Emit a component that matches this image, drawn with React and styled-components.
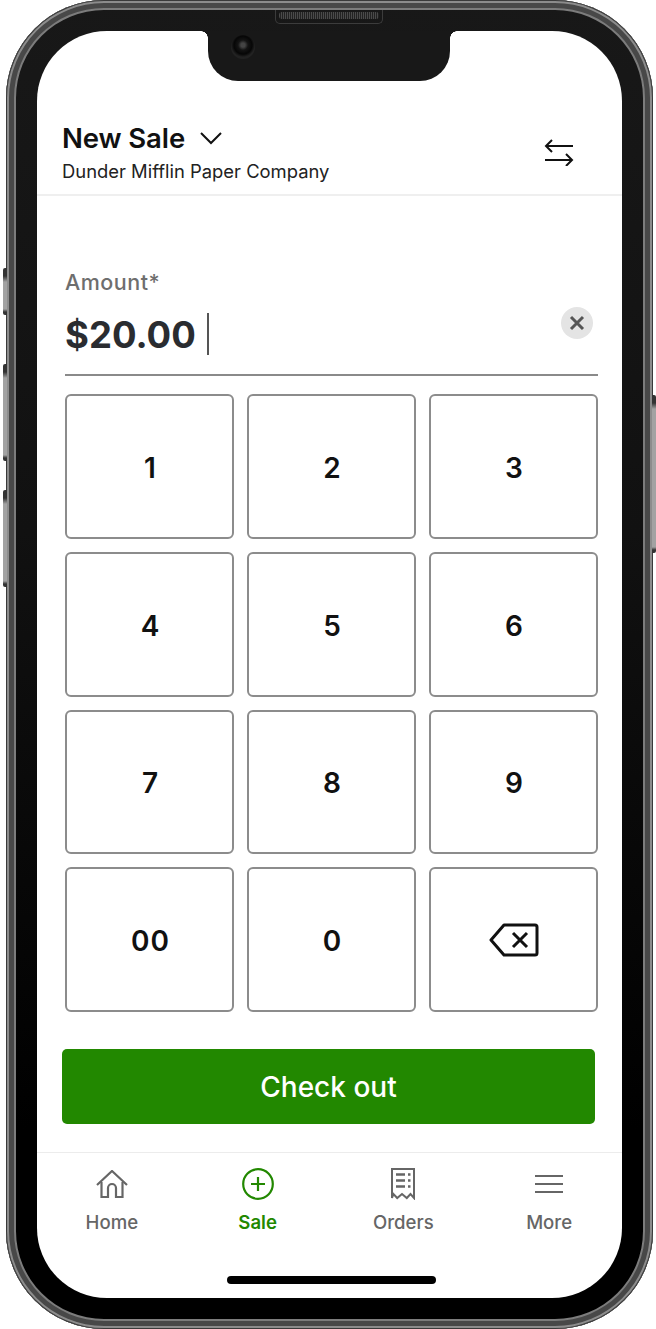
import React from 'react'
import styled, { createGlobalStyle } from 'styled-components'

const GlobalStyle = createGlobalStyle`
  html, body { margin: 0; padding: 0; background: #fff; }
  * { box-sizing: border-box; }
`

const Page = styled.div`
  width: 656px;
  height: 1329px;
  padding-left: 6px;
  font-family: Inter, 'Liberation Sans', sans-serif;
  position: relative;
  overflow: hidden;
`

const Frame = styled.div`
  position: relative;
  width: 647px;
  height: 1329px;
  padding: 31px;
  border-radius: 98px;
  background: linear-gradient(180deg, #181818 0%, #111 40%, #000 85%);
  box-shadow:
    inset 0 0 0 1px #3a3a3a,
    inset 0 0 0 3px #8c8c8c,
    inset 0 0 0 8px #484848,
    inset 0 0 0 10px #7c7c7c;
`

const SideButton = styled.div`
  position: absolute;
  top: ${p => p.$top}px;
  height: ${p => p.$height}px;
  width: 4px;
  ${p => (p.$right ? 'right: -3px; border-radius: 0 2px 2px 0;' : 'left: -3px; border-radius: 2px 0 0 2px;')}
  background: linear-gradient(180deg, #333 0 8px, #a2a2a2 14px, #a2a2a2 calc(100% - 6px), #333 calc(100% - 3px));
`

const Notch = styled.div`
  position: absolute;
  z-index: 2;
  left: 202px;
  top: 31px;
  width: 242px;
  height: 50px;
  background: #181818;
  border-radius: 0 0 30px 30px;

  &::before, &::after {
    content: '';
    position: absolute;
    top: 0;
    width: 7px;
    height: 7px;
  }
  &::before {
    left: -7px;
    background: radial-gradient(circle at 0 100%, transparent 6.5px, #181818 7px);
  }
  &::after {
    right: -7px;
    background: radial-gradient(circle at 100% 100%, transparent 6.5px, #181818 7px);
  }
`

const Speaker = styled.div`
  position: absolute;
  z-index: 2;
  left: 269px;
  top: 10px;
  width: 108px;
  height: 14px;
  border: 1px solid #3c3c3c;
  border-top: none;
  border-radius: 0 0 5px 5px;
  padding: 2px 3px 0;

  &::after {
    content: '';
    display: block;
    height: 7px;
    border-radius: 3px;
    background: repeating-linear-gradient(90deg, #4a4a4a 0 1px, #222 1px 2px);
  }
`

const Camera = styled.div`
  position: absolute;
  z-index: 2;
  left: 225px;
  top: 35px;
  width: 24px;
  height: 24px;
  border-radius: 50%;
  background: radial-gradient(circle at 50% 42%, #444 0 2px, #141414 5px, #060606 9px, #222 12px);
`

const Screen = styled.div`
  position: relative;
  width: 585px;
  height: 1267px;
  background: #fff;
  border-radius: 70px;
  overflow: hidden;
  display: flex;
  flex-direction: column;
`

const Header = styled.header`
  height: 165px;
  flex: none;
  border-bottom: 2px solid #efefef;
  padding: 90px 48px 0 25px;
  display: flex;
  justify-content: space-between;
  align-items: flex-start;
`

const TitleRow = styled.div`
  display: flex;
  align-items: center;
  gap: 15px;
  height: 34px;
`

const Title = styled.h1`
  margin: 0;
  font-size: 27.5px;
  font-weight: 600;
  letter-spacing: -0.1px;
  color: #111;
`

const Subtitle = styled.div`
  font-size: 18.4px;
  line-height: 24px;
  margin-top: 4px;
  color: #222;
`

const SwapButton = styled.div`
  margin-top: 17px;
  width: 30px;
  height: 28px;
`

const Body = styled.main`
  flex: 1;
  padding: 72px 24px 0 28px;
`

const AmountLabel = styled.div`
  font-size: 21.5px;
  letter-spacing: 0.5px;
  line-height: 28px;
  font-weight: 500;
  color: #6e6e6e;
`

const AmountRow = styled.div`
  height: 77px;
  margin-top: 3px;
  border-bottom: 2px solid #8a8a8a;
  display: flex;
  align-items: flex-start;
`

const AmountValue = styled.div`
  font-size: 36.5px;
  line-height: 48px;
  margin-top: 12px;
  font-weight: 700;
  color: #2a2c30;
`

const Caret = styled.div`
  width: 2px;
  height: 42px;
  margin: 14px 0 0 11px;
  background: #555;
`

const ClearButton = styled.div`
  margin: 8px 5px 0 auto;
  width: 32px;
  height: 32px;
  border-radius: 50%;
  background: #e4e4e4;
  display: flex;
  align-items: center;
  justify-content: center;
`

const Keypad = styled.div`
  margin-top: 18px;
  height: 618px;
  display: grid;
  grid-template-columns: repeat(3, 169px);
  grid-auto-rows: 1fr;
  column-gap: 13px;
  row-gap: 13px;
`

const Key = styled.div`
  border: 2px solid #8c8c8c;
  border-radius: 6px;
  background: #fff;
  display: flex;
  align-items: center;
  justify-content: center;
  font-size: 28px;
  font-weight: 600;
  letter-spacing: 1px;
  color: #111;
`

const KeyLabel = styled.span`
  padding: 3px 0 0 2px;
`

const CheckoutButton = styled.div`
  margin: 37px 27px 0 25px;
  height: 75px;
  flex: none;
  background: #228800;
  border-radius: 5px;
  color: #fff;
  font-size: 28px;
  font-weight: 500;
  display: flex;
  align-items: center;
  justify-content: center;
`

const TabBar = styled.nav`
  margin-top: 28px;
  height: 146px;
  flex: none;
  border-top: 1px solid #ececec;
  padding-left: 2px;
  display: grid;
  grid-template-columns: repeat(4, 1fr);
  position: relative;
`

const Tab = styled.div`
  display: flex;
  flex-direction: column;
  align-items: center;
  padding-top: 13px;
  color: ${p => (p.$active ? '#228800' : '#666')};
  font-size: 18.6px;
  font-weight: ${p => (p.$active ? 600 : 500)};
`

const TabIcon = styled.div`
  width: 36px;
  height: 36px;
  display: flex;
  align-items: center;
  justify-content: center;
`

const TabLabel = styled.div`
  margin-top: 8px;
  line-height: 24px;
`

const HomeBar = styled.div`
  position: absolute;
  left: 190px;
  bottom: 14px;
  width: 209px;
  height: 8px;
  border-radius: 4px;
  background: #000;
`

const Chevron = () => (
  <svg width="22" height="14" viewBox="0 0 22 14" fill="none" stroke="#111" strokeWidth="2">
    <path d="M1 2l10 10L21 2" />
  </svg>
)

const SwapIcon = () => (
  <svg width="30" height="28" viewBox="0 0 30 28" fill="none" stroke="#111" strokeWidth="2">
    <path d="M29 8H2M8 2L2 8l6 6" />
    <path d="M1 22h27M22 16l6 6-6 6" />
  </svg>
)

const CloseIcon = () => (
  <svg width="16" height="16" viewBox="0 0 16 16" fill="none" stroke="#555" strokeWidth="3">
    <path d="M2 2l12 12M14 2L2 14" />
  </svg>
)

const BackspaceIcon = () => (
  <svg width="50" height="34" viewBox="0 0 50 34" fill="none" stroke="#111" strokeWidth="3" strokeLinejoin="round">
    <path d="M15 2h31a2 2 0 0 1 2 2v26a2 2 0 0 1-2 2H15L2 17z" />
    <path d="M24 10l14 14M38 10L24 24" />
  </svg>
)

const HomeIcon = () => (
  <svg width="32" height="28" viewBox="0 0 32 28" fill="none" stroke="#666" strokeWidth="2.2">
    <path d="M1 15L16 1l15 14" />
    <path d="M5.5 12v15h6.5v-9a4 4 0 0 1 8 0v9h6.500V12" />
  </svg>
)

const SaleIcon = () => (
  <svg width="32" height="32" viewBox="0 0 32 32" fill="none" stroke="#228800" strokeWidth="2.2">
    <circle cx="16" cy="16" r="14.8" />
    <path d="M16 9v14M9 16h14" />
  </svg>
)

const OrdersIcon = () => (
  <svg width="26" height="32" viewBox="0 0 26 32" fill="none" stroke="#666" strokeWidth="2">
    <path d="M2 30V1h22v29l-3.500-4-3.700 4-4.800-4-4.800 4-3.700-4z" />
    <path d="M6 6.500h9M6 12.500h9M6 18.500h9M18 6.500h2.500M18 12.500h2.500M18 18.500h2.500" strokeWidth="2.400" />
  </svg>
)

const MenuIcon = () => (
  <svg width="28" height="20" viewBox="0 0 28 20" fill="none" stroke="#666" strokeWidth="2">
    <path d="M0 2h28M0 10h28M0 18h28" />
  </svg>
)

const keys = ['1', '2', '3', '4', '5', '6', '7', '8', '9', '00', '0']

const tabs = [
  { label: 'Home', icon: <HomeIcon /> },
  { label: 'Sale', icon: <SaleIcon />, active: true },
  { label: 'Orders', icon: <OrdersIcon /> },
  { label: 'More', icon: <MenuIcon /> },
]

export default function App() {
  return (
    <Page>
      <GlobalStyle />
      <Frame>
        <SideButton $top={268} $height={47} />
        <SideButton $top={364} $height={97} />
        <SideButton $top={490} $height={97} />
        <SideButton $right $top={395} $height={158} />
        <Speaker />
        <Notch />
        <Camera />
        <Screen>
          <Header>
            <div>
              <TitleRow>
                <Title>New Sale</Title>
                <Chevron />
              </TitleRow>
              <Subtitle>Dunder Mifflin Paper Company</Subtitle>
            </div>
            <SwapButton><SwapIcon /></SwapButton>
          </Header>
          <Body>
            <AmountLabel>Amount*</AmountLabel>
            <AmountRow>
              <AmountValue>$20.00</AmountValue>
              <Caret />
              <ClearButton><CloseIcon /></ClearButton>
            </AmountRow>
            <Keypad>
              {keys.map(k => <Key key={k}><KeyLabel>{k}</KeyLabel></Key>)}
              <Key><BackspaceIcon /></Key>
            </Keypad>
          </Body>
          <CheckoutButton>Check out</CheckoutButton>
          <TabBar>
            {tabs.map(t => (
              <Tab key={t.label} $active={t.active}>
                <TabIcon>{t.icon}</TabIcon>
                <TabLabel>{t.label}</TabLabel>
              </Tab>
            ))}
            <HomeBar />
          </TabBar>
        </Screen>
      </Frame>
    </Page>
  )
}
